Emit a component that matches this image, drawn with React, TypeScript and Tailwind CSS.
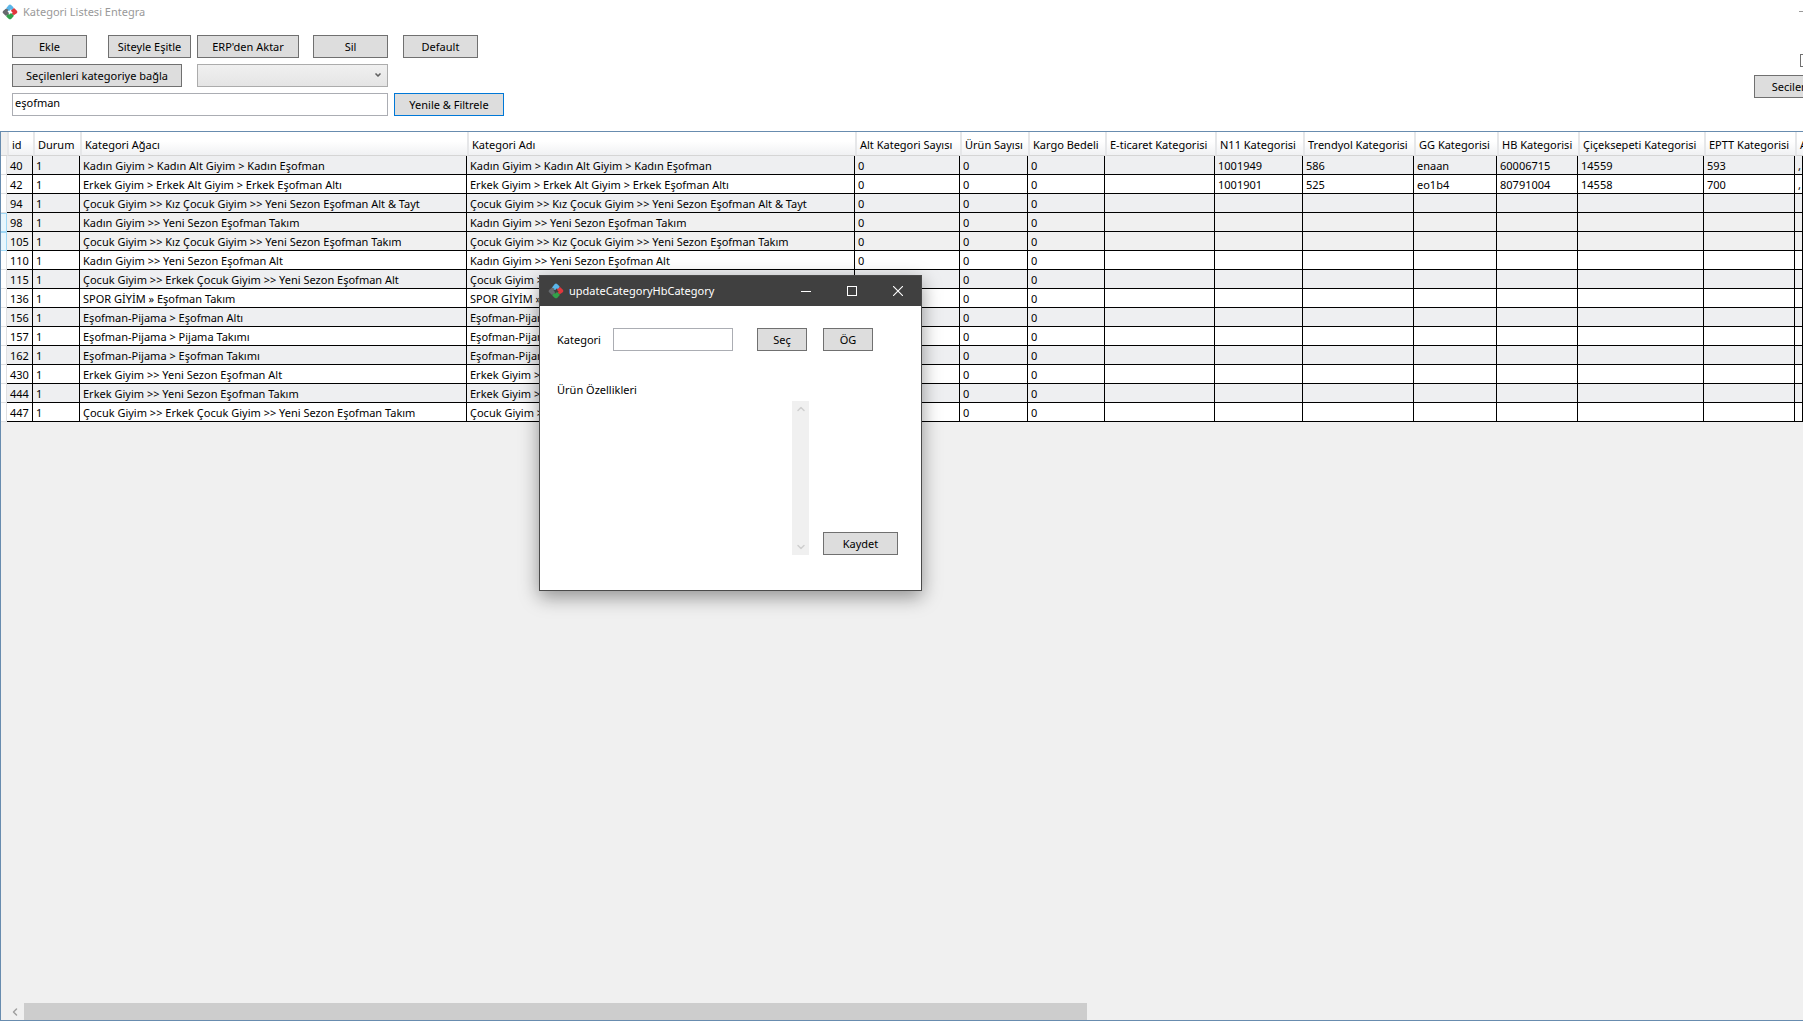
import { ChevronDown, ChevronLeft, ChevronUp } from "lucide-react";
import clsx from "clsx";

type Category = {
  id: number;
  name: string;
  marketplace?: string[];
  shade: string;
};

const columns = [
  { label: "id", width: "w-[26px]" },
  { label: "Durum", width: "w-[47px]" },
  { label: "Kategori Ağacı", width: "w-[387px]" },
  { label: "Kategori Adı", width: "w-[388px]" },
  { label: "Alt Kategori Sayısı", width: "w-[105px]" },
  { label: "Ürün Sayısı", width: "w-[68px]" },
  { label: "Kargo Bedeli", width: "w-[77px]" },
  { label: "E-ticaret Kategorisi", width: "w-[110px]" },
  { label: "N11 Kategorisi", width: "w-[88px]" },
  { label: "Trendyol Kategorisi", width: "w-[111px]" },
  { label: "GG Kategorisi", width: "w-[83px]" },
  { label: "HB Kategorisi", width: "w-[81px]" },
  { label: "Çiçeksepeti Kategorisi", width: "w-[126px]" },
  { label: "EPTT Kategorisi", width: "w-[91px]" },
  { label: "A", width: "w-auto" },
];

const GREY = "bg-[#eeeff1]";
const SELECTED = "bg-[#f0f0f0]";
const WHITE = "bg-white";

const categories: Category[] = [
  {
    id: 40,
    name: "Kadın Giyim > Kadın Alt Giyim > Kadın Eşofman",
    marketplace: ["1001949", "586", "enaan", "60006715", "14559", "593", ","],
    shade: GREY,
  },
  {
    id: 42,
    name: "Erkek Giyim > Erkek Alt Giyim > Erkek Eşofman Altı",
    marketplace: ["1001901", "525", "eo1b4", "80791004", "14558", "700", ","],
    shade: WHITE,
  },
  { id: 94, name: "Çocuk Giyim >> Kız Çocuk Giyim >> Yeni Sezon Eşofman Alt & Tayt", shade: GREY },
  { id: 98, name: "Kadın Giyim >> Yeni Sezon Eşofman Takım", shade: SELECTED },
  { id: 105, name: "Çocuk Giyim >> Kız Çocuk Giyim >> Yeni Sezon Eşofman Takım", shade: SELECTED },
  { id: 110, name: "Kadın Giyim >> Yeni Sezon Eşofman Alt", shade: WHITE },
  { id: 115, name: "Çocuk Giyim >> Erkek Çocuk Giyim >> Yeni Sezon Eşofman Alt", shade: GREY },
  { id: 136, name: "SPOR GİYİM » Eşofman Takım", shade: WHITE },
  { id: 156, name: "Eşofman-Pijama > Eşofman Altı", shade: GREY },
  { id: 157, name: "Eşofman-Pijama > Pijama Takımı", shade: WHITE },
  { id: 162, name: "Eşofman-Pijama > Eşofman Takımı", shade: GREY },
  { id: 430, name: "Erkek Giyim >> Yeni Sezon Eşofman Alt", shade: WHITE },
  { id: 444, name: "Erkek Giyim >> Yeni Sezon Eşofman Takım", shade: GREY },
  { id: 447, name: "Çocuk Giyim >> Erkek Çocuk Giyim >> Yeni Sezon Eşofman Takım", shade: WHITE },
];

const emptyMarketplace = ["", "", "", "", "", "", ""];

const Logo = () => (
  <svg viewBox="0 0 16 16" className="h-4 w-4 shrink-0">
    <path d="M4 4.4 6.6 1.2Q8 0 9.4 1.2L11.6 3.6 10.8 6.2 8.6 5.4 7 7.2Z" fill="#5bb5e8" />
    <path d="M12 4 14.9 6.8Q16 8 14.8 9.2L12.2 11 9.6 10.4 10.6 8.4 8.8 6.8Z" fill="#e0373c" />
    <path d="M12 11.8 9.4 14.7Q8 16 6.6 14.7L4.2 12.4 5.4 9.8 7.4 10.6 9 9Z" fill="#33a04a" />
    <path d="M3.8 4.8 6.4 5.6 5.6 7.6 7.2 9.2 4 12 1.1 9.2Q0 8 1.1 6.9Z" fill="#666a6e" />
  </svg>
);

const Button = ({ label, className, focused }: { label: string; className: string; focused?: boolean }) => (
  <button
    className={clsx(
      "h-[23px] shrink-0 border bg-[#dddddd] pt-px text-center leading-4",
      focused ? "border-[#0078d7]" : "border-[#707070]",
      className,
    )}
  >
    {label}
  </button>
);

const TitleBar = () => (
  <header className="flex h-6 items-center overflow-hidden pl-0.5 text-[#999999]">
    <Logo />
    <h1 className="ml-[5px]">Kategori Listesi Entegra</h1>
    <button aria-label="Simge durumuna küçült" className="mb-0.5 ml-auto h-px w-1 bg-[#999999]" />
  </header>
);

const Toolbar = () => (
  <div className="flex items-start justify-between pt-[11px] pb-[15px] pl-3">
    <div className="flex flex-col gap-1.5">
      <div className="flex">
        <Button label="Ekle" className="w-[75px]" />
        <Button label="Siteyle Eşitle" className="ml-[21px] w-[83px]" />
        <Button label="ERP'den Aktar" className="ml-1.5 w-[102px]" />
        <Button label="Sil" className="ml-3.5 w-[75px]" />
        <Button label="Default" className="ml-[15px] w-[75px]" />
      </div>
      <div className="flex">
        <Button label="Seçilenleri kategoriye bağla" className="w-[170px]" />
        <div className="relative ml-[15px]">
          <select
            aria-label="Kategori"
            className="h-[23px] w-[191px] appearance-none border border-[#acacac] bg-linear-to-b from-[#f0f0f0] to-[#e5e5e5]"
          />
          <ChevronDown className="pointer-events-none absolute top-[7px] right-1.5 h-2 w-2 text-[#606060]" strokeWidth={5} />
        </div>
      </div>
      <div className="flex">
        <input
          type="text"
          aria-label="Filtre"
          defaultValue="eşofman"
          className="h-[23px] w-[376px] border border-[#abadb3] bg-white px-0.5 pb-1 outline-none"
        />
        <Button label="Yenile & Filtrele" className="ml-1.5 w-[110px]" focused />
      </div>
    </div>

    <div className="flex w-[49px] flex-col items-end gap-2 overflow-hidden pt-[19px]">
      <div className="h-[13px] w-[3px] overflow-hidden">
        <input
          type="checkbox"
          aria-label="Tümünü seç"
          className="block h-[13px] w-[13px] appearance-none border border-[#707070] bg-white"
        />
      </div>
      <Button label="Secilenleri" className="w-[88px] self-start" />
    </div>
  </div>
);

const CategoryTable = () => (
  <table className="w-full table-fixed border-separate border-spacing-0 text-left">
    <colgroup>
      <col className="w-1.5" />
      {columns.map(({ label, width }) => (
        <col key={label} className={width} />
      ))}
    </colgroup>
    <thead>
      <tr className="h-6">
        <td className="border-b border-[#d5d5d5] bg-[#f0f0f0] p-0" />
        {columns.map(({ label }) => (
          <th
            key={label}
            className="overflow-hidden border-b border-l-2 border-b-[#d5d5d5] border-l-[#e6e7e9] bg-linear-to-b from-white from-40% to-[#f0f1f3] p-0 pt-0.5 pl-[3px] leading-4 font-normal whitespace-nowrap"
          >
            {label}
          </th>
        ))}
      </tr>
    </thead>
    <tbody>
      {categories.map(({ id, name, marketplace, shade }) => (
        <tr key={id} className={clsx("h-[19px] leading-[17px]", shade)}>
          <td
            className={clsx(
              "border-b p-0",
              shade === SELECTED ? "border-t border-r border-[#9fd8f6] bg-[#e8f6fd]" : "border-r border-[#dfe0e2] bg-white",
            )}
          />
          {[id, 1, name, name, 0, 0, 0, "", ...(marketplace ?? emptyMarketplace)].map((value, index) => (
            <td key={index} className="overflow-hidden border-r border-b border-black p-0 pt-px pl-[3px] whitespace-nowrap">
              {value}
            </td>
          ))}
        </tr>
      ))}
    </tbody>
  </table>
);

const ScrollBar = () => (
  <div className="mt-auto flex h-[17px] shrink-0">
    <button aria-label="Sola kaydır" className="flex w-[23px] items-center justify-end pr-[3px]">
      <ChevronLeft className="h-3 w-3 text-[#a0a0a0]" strokeWidth={3} />
    </button>
    <div className="w-[59%] bg-[#cdcdcd]" />
  </div>
);

const CategoryDialog = () => (
  <section
    role="dialog"
    aria-labelledby="dialog-title"
    className="absolute top-[275px] left-[539px] w-[383px] border border-[#4a4a4a] bg-white shadow-[0_6px_18px_rgba(0,0,0,0.4)]"
  >
    <header className="flex h-[30px] items-center bg-[#404040] pl-2 text-white">
      <Logo />
      <h2 id="dialog-title" className="ml-[5px]">
        updateCategoryHbCategory
      </h2>
      <div className="ml-auto flex">
        <button aria-label="Küçült" className="grid h-[30px] w-[46px] place-items-center">
          <span className="h-px w-2.5 bg-white" />
        </button>
        <button aria-label="Büyüt" className="grid h-[30px] w-[46px] place-items-center">
          <span className="h-2.5 w-2.5 border border-white" />
        </button>
        <button aria-label="Kapat" className="grid h-[30px] w-[46px] place-items-center">
          <svg viewBox="0 0 10 10" className="h-2.5 w-2.5" stroke="currentColor" strokeWidth="1.1">
            <path d="M0 0 10 10M10 0 0 10" />
          </svg>
        </button>
      </div>
    </header>

    <div className="pt-[22px] pr-[23px] pb-[35px] pl-[17px]">
      <div className="flex items-center">
        <label htmlFor="kategori" className="w-14 pt-px">
          Kategori
        </label>
        <input id="kategori" type="text" className="h-[23px] w-[120px] border border-[#abadb3] bg-white px-0.5" />
        <Button label="Seç" className="ml-6 w-[50px]" />
        <Button label="ÖG" className="ml-4 w-[50px]" />
      </div>
      <h3 className="mt-[31px] leading-4">Ürün Özellikleri</h3>
      <div className="mt-[3px] flex items-end justify-end">
        <div className="flex h-[154px] w-[17px] flex-col items-center justify-between bg-[#f0f0f0] py-0.5 text-[#cfcfcf]">
          <ChevronUp className="h-3 w-3" strokeWidth={3} />
          <ChevronDown className="h-3 w-3" strokeWidth={3} />
        </div>
        <Button label="Kaydet" className="ml-3.5 w-[75px]" />
      </div>
    </div>
  </section>
);

export default function App() {
  return (
    <main className="relative flex h-screen flex-col overflow-hidden bg-white pb-px font-['Noto_Sans',sans-serif] text-[11px] text-black">
      <TitleBar />
      <Toolbar />
      <div className="flex min-h-0 flex-1 flex-col overflow-hidden border-y border-l border-[#688caf] bg-[#f0f0f0]">
        <CategoryTable />
        <ScrollBar />
      </div>
      <CategoryDialog />
    </main>
  );
}
